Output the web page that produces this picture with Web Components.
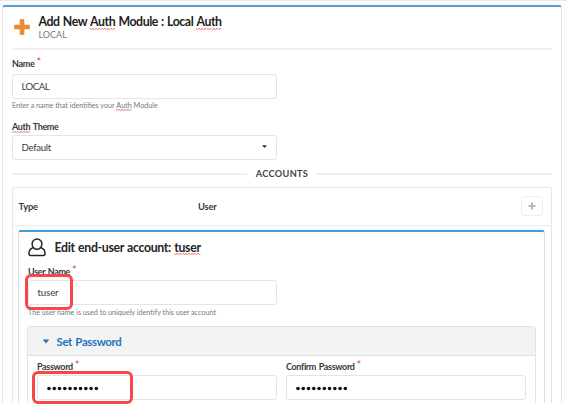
<!DOCTYPE html>
<html lang="en">
<head>
<meta charset="utf-8">
<title>Auth Module</title>
<style>
html,body{margin:0;height:404px;overflow:hidden;background:#fcfcfc}
body{font-family:Lato,"Liberation Sans",sans-serif;color:#3a3b3d}
</style>
</head>
<body>
<auth-page></auth-page>
<script>
const define = (name, html, init) => customElements.define(name, class extends HTMLElement {
  constructor(){
    super();
    const root = this.attachShadow({mode:'open'});
    const t = document.createElement('template');
    t.innerHTML = html;
    root.append(t.content.cloneNode(true));
  }
  connectedCallback(){ if(init) init(this, this.shadowRoot); }
});

// Word with the spell checker's red dotted underline
define('spell-word', `<style>
:host{display:inline-block;position:relative}
svg{position:absolute;left:0;bottom:var(--wave,0px);width:100%;height:2px;overflow:hidden}
</style><slot></slot><svg><defs><pattern id="w" width="3" height="2" patternUnits="userSpaceOnUse"><path d="M0 .4L1.5 1.6L3 .4" fill="none" stroke="#ee5a5a" stroke-width=".9"/></pattern></defs><rect width="100%" height="2" fill="url(#w)"/></svg>`);

define('field-label', `<style>
:host{display:block;height:14px;line-height:var(--line,14px);font-weight:700;font-size:9px;letter-spacing:-.34px;word-spacing:.8px;white-space:nowrap;color:#38393b;--wave:1px}
i{display:none;font-style:normal;color:#e8453d;font-size:11px;font-weight:400;margin-left:2px;vertical-align:1.5px;line-height:0}
:host([required]) i{display:inline}
</style><span><slot></slot></span><i>*</i>`);

define('text-box', `<style>
:host{display:flex;align-items:center;box-sizing:border-box;height:25px;padding:0 9px 1px 8.500px;border:1px solid #e3e4e6;border-radius:3px;background:#fff;font-size:9.6px;letter-spacing:var(--track,-.3px);color:#3c3d3f}
svg{display:none;margin-left:auto;margin-right:-1px}
:host([select]) svg{display:block}
</style><span><slot></slot></span><svg width="7" height="4" viewBox="0 0 7 4"><path d="M1 .3H6L3.500 3.100Z" fill="#333"/></svg>`);

define('field-hint', `<style>
:host{display:block;height:10px;line-height:10px;font-size:7.2px;color:#77787a;white-space:nowrap}
</style><slot></slot>`);

define('pass-dots', `<style>:host{display:block;margin-top:2px}svg{display:block}</style><svg width="54" height="6"></svg>`, (el, root) => {
  const svg = root.querySelector('svg');
  svg.innerHTML = Array.from({length:10},(_,i)=>`<circle cx="${2+i*5.26}" cy="3.5" r="1.8" fill="#111"/>`).join('');
});

define('rule-title', `<style>
:host{display:flex;align-items:center;gap:9px;font-size:9.2px;font-weight:700;line-height:14px;letter-spacing:.3px;color:#444547}
:host::before,:host::after{content:"";height:2px;flex:1;background:#efefef}
</style><slot></slot>`);

define('mark-box', `<style>
:host{position:absolute;box-sizing:border-box;border:3px solid #f94646;border-radius:6px;pointer-events:none}
</style>`);

define('page-heading', `<style>
:host{display:flex;box-sizing:border-box;height:43px;padding:7px 0 0 1.500px;border-bottom:2px solid #efefef}
svg{flex:none;margin:5px 9px 0 0}
h1{margin:0;font-size:12.3px;line-height:16px;letter-spacing:-.42px;word-spacing:.6px;font-weight:700;color:#1d1e20;white-space:nowrap}
p{margin:-1px 0 0;font-size:9px;line-height:11px;color:#77787a}
</style><svg width="16" height="16" viewBox="0 0 16 16"><path d="M6.1.5h3.9v5.6h5.5v3.8H10v5.6H6.1V9.9H.5V6.1h5.6Z" fill="#e98b32" stroke="#e98b32" stroke-width=".7" stroke-linejoin="round"/></svg>
<div><h1><slot></slot></h1><p><slot name="sub"></slot></p></div>`);

define('password-panel', `<style>
:host{display:block;box-sizing:border-box;width:509px;height:90px;border:1px solid #e1e2e4;border-bottom:0;border-radius:4px 4px 0 0}
header{display:flex;align-items:center;box-sizing:border-box;height:29px;background:#f2f3f5;border-bottom:1px solid #dfe0e2;padding-left:14px;gap:6.500px;color:#2373b8;font-weight:700;font-size:11.4px;letter-spacing:-.35px;word-spacing:1px;border-radius:3px 3px 0 0}
.grid{display:grid;grid-template-columns:240px 240px;gap:9px;padding:3px 9px 0}
field-label{margin-bottom:2px;--line:16px}
</style><header><svg width="8" height="5" viewBox="0 0 8 5"><path d="M.8.4H7.2L4 4.5Z" fill="#2373b8"/></svg><span>Set Password</span></header>
<div class="grid"><div><field-label required>Password</field-label><text-box><pass-dots></pass-dots></text-box></div>
<div><field-label required>Confirm Password</field-label><text-box><pass-dots></pass-dots></text-box></div></div>`);

define('account-editor', `<style>
:host{display:block;box-sizing:border-box;width:527px;height:173px;margin:4px 0 0 5px;padding:0 0 0 9px;border:1px solid #dfe0e2;border-top:2px solid #429adf;border-bottom:0;border-radius:3px 3px 0 0;background:#fff}
header{display:flex;align-items:center;height:31px;gap:8px;padding-left:.5px;font-size:12.3px;letter-spacing:-.32px;word-spacing:.6px;font-weight:700;color:#242527}
header svg{margin-left:-1px;margin-right:1px}
header span{margin-top:-1px}
.box{width:249px;margin-top:2px;--track:-.1px}
field-label{margin-top:1px;--line:16px}
field-hint{margin:3px 0 8px}
password-panel{margin-left:-1px}
</style><header><svg width="18" height="19" viewBox="0 0 18 19" fill="none" stroke="#252628" stroke-width="1.5" stroke-linejoin="round"><path d="M9 1.1C6.2 1.1 4.1 3.2 4.1 6s2.100 5.300 4.900 5.300S13.900 8.800 13.900 6 11.800 1.100 9 1.100ZM4.900 9.700C2.500 10.500 1 12.600 1 15.400v.7c0 .9.700 1.500 1.600 1.500h12.800c.9 0 1.600-.6 1.600-1.500v-.7c0-2.800-1.500-4.900-3.900-5.700"/></svg><span>Edit end-user account: <spell-word>tuser</spell-word></span></header>
<field-label required>User Name</field-label>
<text-box class="box">tuser</text-box>
<field-hint>The user name is used to uniquely identify this user account</field-hint>
<password-panel></password-panel>`);

define('account-table', `<style>
:host{display:block;box-sizing:border-box;height:217px;border:1px solid #e5e6e8;border-bottom:0;border-radius:3px 3px 0 0}
.head{display:grid;grid-template-columns:179.500px 1fr 22px;align-items:center;box-sizing:border-box;height:38px;padding:0 8px 0 5.500px;border-bottom:1px solid #ececee;font-size:9.3px;letter-spacing:-.15px;font-weight:700;color:#38393b}
button{box-sizing:border-box;width:22px;height:20px;margin-top:-1px;padding:0;border:1px solid #eeeeef;border-radius:3px;background:#fff;display:grid;place-items:center}
</style><div class="head"><span>Type</span><span>User</span><button aria-label="Add"><svg width="8" height="8" viewBox="0 0 8 8"><path d="M4 .5V7.500M.5 4H7.500" stroke="#b8b9bb" stroke-width="1.900"/></svg></button></div><slot></slot>`);

define('auth-page', `<style>
:host{display:block;position:relative;box-sizing:border-box;width:567px;height:404px;overflow:hidden;border-top:1px solid #e7e7ea;padding:4px 0 0 2px}
main{display:block;box-sizing:border-box;width:560px;height:399px;padding:0 9px;border:1px solid #e5e6e8;border-top:2px solid #549dd8;border-bottom:0;border-radius:3px 3px 0 0;background:#fff}
.col{width:265px}
.n{margin-top:7px}
.n + text-box{margin-top:3px;--track:-.5px}
field-hint{margin-top:2px}
.t{margin-top:9px}
.t + text-box{margin-top:1px}
rule-title{margin-top:7px}
account-table{margin-top:6px}
footer{position:absolute;left:0;right:0;bottom:0;height:1px;background:#fff}
mark-box.u{left:25px;top:273px;width:48px;height:36px}
mark-box.p{left:32px;top:370px;width:101px;height:33px}
</style><main>
<page-heading>Add New <spell-word>Auth</spell-word> Module : Local <spell-word>Auth</spell-word><span slot="sub">LOCAL</span></page-heading>
<div class="col"><field-label class="n" required>Name</field-label><text-box>LOCAL</text-box>
<field-hint>Enter a name that identifies your <spell-word>Auth</spell-word> Module</field-hint>
<field-label class="t"><spell-word>Auth</spell-word> Theme</field-label><text-box select>Default</text-box></div>
<rule-title>ACCOUNTS</rule-title>
<account-table><account-editor></account-editor></account-table>
</main><footer></footer><mark-box class="u"></mark-box><mark-box class="p"></mark-box>`);
</script>
</body>
</html>
